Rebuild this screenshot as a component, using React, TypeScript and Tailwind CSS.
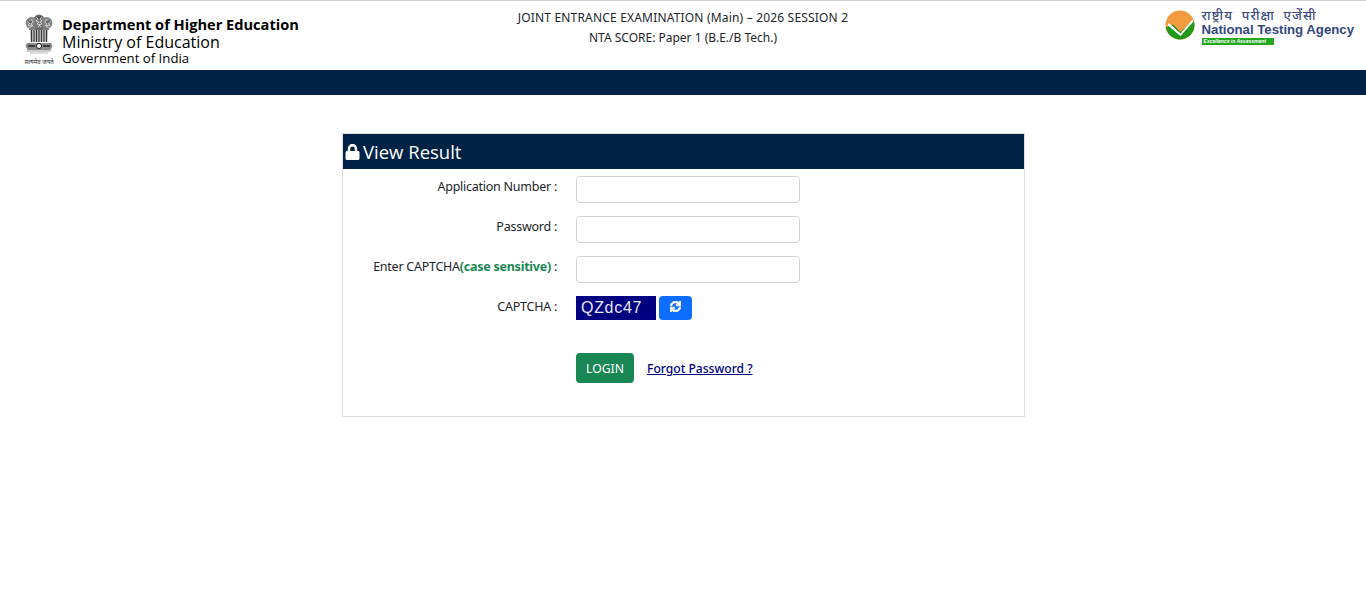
import React from "react";
import { FaLock, FaSync } from "react-icons/fa";

function Emblem() {
  return (
    <svg width="30" height="42" viewBox="0 0 30 42" className="block">
      <g>
        <ellipse cx="15" cy="6" rx="5.5" ry="5.5" fill="#6d6d6d" />
        <ellipse cx="7.5" cy="9" rx="6" ry="6" fill="#858585" />
        <ellipse cx="22.5" cy="9" rx="6" ry="6" fill="#858585" />
        <ellipse cx="15" cy="11" rx="5" ry="6" fill="#777" />
        <path d="M3 7l3 2-2 2 4 1-3 2M27 7l-3 2 2 2-4 1 3 2M12 3l2 2-2 2 3 1-2 2 3 1-2 2M18 3l-2 2 2 2-2 1 2 2-3 1 2 2M7 5l2 3-2 2 2 2M23 5l-2 3 2 2-2 2" stroke="#ddd" strokeWidth=".8" fill="none" />
        <path d="M4 6l2 3 2-2M26 6l-2 3-2-2M13 2l2 2 2-2" stroke="#333" strokeWidth=".8" fill="none" />
        <path d="M6 16h18l-.5 12h-17z" fill="#b5b5b5" />
        <path d="M7.500 16v12M10 16v12M12.500 16v12M15 16v12M17.500 16v12M20 16v12M22.500 16v12" stroke="#333" strokeWidth="1" fill="none" />
        <path d="M5 15h20" stroke="#666" strokeWidth="1.600" />
        <path d="M3 29h24l1.500 3-2 4h-23l-2-4z" fill="#8a8a8a" />
        <path d="M4 32h7M19 32h7" stroke="#222" strokeWidth="1.600" />
        <circle cx="15" cy="32" r="2.600" fill="#eee" stroke="#222" strokeWidth="1" />
        <path d="M3 37h24" stroke="#999" strokeWidth="1" />
        <path d="M6 39h18" stroke="#bbb" strokeWidth="1" />
      </g>
    </svg>
  );
}

function NtaMark() {
  return (
    <svg width="30" height="30" viewBox="0 0 30 30" className="block">
      <circle cx="15" cy="15" r="14.500" fill="#f29a3e" />
      <path d="M.7 17.500c1.500 7 7.500 12 14.300 12 8 0 14.500-6.500 14.500-14.500 0-1.800-.3-3.500-.9-5L15.500 22 8 14.500z" fill="#1f9a1a" />
      <path d="M4 13l11.500 10.500L27.500 9.500l1 2L15.500 26 2.500 15z" fill="#fff" />
    </svg>
  );
}

function Row({ label, children }: { label: React.ReactNode; children: React.ReactNode }) {
  return (
    <div className="flex h-10 items-start">
      <label className="w-[215px] pr-[1px] pt-[1px] text-right text-[12.5px] leading-5 tracking-[-0.25px] text-[#212529]">{label}</label>
      <div className="ml-[18px]">{children}</div>
    </div>
  );
}

function Field({ type = "text" }: { type?: string }) {
  return <input type={type} className="block h-[27px] w-[224px] rounded-[4px] border border-[#ced4da] bg-white" />;
}

export default function App() {
  return (
    <div className="min-h-[603px] bg-white font-['Open_Sans','Noto_Sans',sans-serif] text-[#212529]">
      <header className="flex h-[70px] border-t border-[#cfcfcf]">
        <div className="flex w-[400px] pl-[22px] pt-[13px]">
          <div className="flex w-[34px] flex-col items-center">
            <Emblem />
            <span className="mt-[2px] whitespace-nowrap font-['Noto_Sans',sans-serif] text-[6px] leading-[8px] text-[#333]">सत्यमेव जयते</span>
          </div>
          <div className="ml-[6px] pt-[1px] text-black">
            <div className="whitespace-nowrap text-[14.6px] font-bold leading-[18px]">Department of Higher Education</div>
            <div className="-mt-[0.5px] whitespace-nowrap text-[16px] leading-[18px]">Ministry of Education</div>
            <div className="whitespace-nowrap text-[13.2px] leading-[14px]">Government of India</div>
          </div>
        </div>
        <div className="flex-1 pt-[7px] text-center font-['Noto_Sans',sans-serif] text-[12px] leading-5 text-[#212529]">
          <div className="tracking-[0.18px]">JOINT ENTRANCE EXAMINATION (Main) – 2026 SESSION 2</div>
          <div>NTA SCORE: Paper 1 (B.E./B Tech.)</div>
        </div>
        <div className="flex w-[400px] justify-end pr-[12px] pt-[6px]">
          <div className="mt-[3px]"><NtaMark /></div>
          <div className="ml-[7px] flex flex-col">
            <span className="whitespace-nowrap font-['Noto_Sans',sans-serif] text-[13px] font-medium leading-[16px] tracking-[1.2px] [word-spacing:4px] text-[#3b4a80]">राष्ट्रीय परीक्षा एजेंसी</span>
            <span className="whitespace-nowrap font-['Liberation_Sans',sans-serif] text-[13.2px] font-bold leading-[14px] text-[#33477f]">National Testing Agency</span>
            <span className="mt-[1px] h-[7px] w-[72px] overflow-hidden whitespace-nowrap bg-[#22a81f] pl-[2px] font-['Liberation_Sans',sans-serif] text-[5px] font-bold italic leading-[7px] text-white">Excellence in Assessment</span>
          </div>
        </div>
      </header>
      <div className="h-[25px] bg-[#002244]" />
      <main className="flex justify-center pt-[38px]">
        <div className="ml-[1px] h-[284px] w-[683px] border border-[#dfdfe3]">
          <div className="flex h-[35px] items-center bg-[#002244] pl-[2px] text-white">
            <FaLock className="h-[16px] w-[15px]" />
            <span className="ml-[3px] pt-[1px] text-[18.5px] leading-none">View Result</span>
          </div>
          <div className="pt-[7px] font-['Noto_Sans',sans-serif]">
            <Row label="Application Number :"><Field /></Row>
            <Row label="Password :"><Field type="password" /></Row>
            <Row label={<>Enter CAPTCHA<b className="font-bold text-[#198754]">(case sensitive)</b> :</>}><Field /></Row>
            <Row label="CAPTCHA :">
              <div className="flex items-start">
                <div className="h-6 w-20 bg-[#000080] pl-[5px] font-['Liberation_Sans',sans-serif] text-[16px] leading-6 tracking-[0.7px] text-[#e8e8f4]">QZdc47</div>
                <button className="ml-[3px] flex h-6 w-[33px] items-center justify-center rounded-[4px] bg-[#0d6efd] text-white">
                  <FaSync className="-mt-[3px] h-[11px] w-[11px]" stroke="currentColor" strokeWidth={40} />
                </button>
              </div>
            </Row>
            <div className="ml-[233px] mt-[17px] flex items-center">
              <button className="h-[30px] w-[58px] rounded-[4px] bg-[#198754] pt-[2px] text-[12.2px] text-white">LOGIN</button>
              <a href="#" className="ml-[13px] pt-[2px] text-[12.1px] font-medium text-[#000080] underline">Forgot Password ?</a>
            </div>
          </div>
        </div>
      </main>
    </div>
  );
}
